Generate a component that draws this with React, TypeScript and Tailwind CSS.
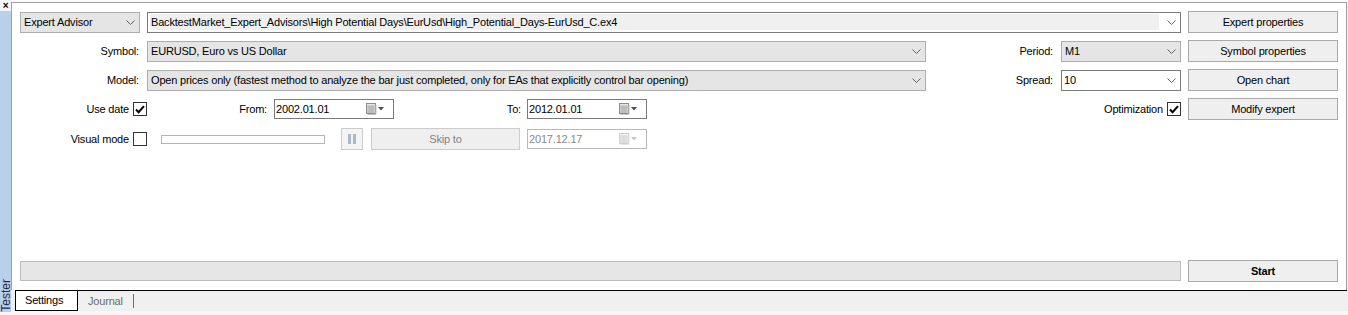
import React from 'react';

function Chevron({ disabled }: { disabled?: boolean }) {
  return (
    <svg width="9" height="5" viewBox="0 0 9 5" className="shrink-0">
      <path d="M0.5 0.5 L4.5 4.5 L8.5 0.5" fill="none" stroke={disabled ? '#b0b0b0' : '#606060'} strokeWidth="1" />
    </svg>
  );
}

function CalIcon({ disabled }: { disabled?: boolean }) {
  const line = disabled ? '#d2d2d2' : '#a4a4a4';
  return (
    <svg width="19" height="12" viewBox="0 0 19 12" className="shrink-0">
      <rect x="0.5" y="0.5" width="9" height="10" fill={disabled ? '#f2f2f2' : '#e6e6e6'} stroke={disabled ? '#cfcfcf' : '#8e8e8e'} />
      <path d="M10 2 V11.5 H1.5" fill="none" stroke={disabled ? '#e4e4e4' : '#c2c2c2'} />
      <path d="M3 3 V10 M5 3 V10 M7 3 V10 M1 3 H9 M1 5 H9 M1 7 H9 M1 9 H9" stroke={line} strokeWidth="0.8" />
      <path d="M12 4 H18 L15 7.5 Z" fill={disabled ? '#c8c8c8' : '#3f5079'} />
    </svg>
  );
}

function Check({ checked }: { checked?: boolean }) {
  return (
    <div className="flex h-[14px] w-[14px] shrink-0 items-center justify-center border border-[#333333] bg-white">
      {checked && (
        <svg width="10" height="9" viewBox="0 0 10 9">
          <path d="M1 4.5 L3.6 7.2 L9 1.2" fill="none" stroke="#000" strokeWidth="2" />
        </svg>
      )}
    </div>
  );
}

function Btn({ children, bold }: { children: React.ReactNode; bold?: boolean }) {
  return (
    <div
      className={`ml-[7px] flex h-[22px] w-[150px] shrink-0 items-center justify-center border border-[#a9a9a9] bg-[#efefef] ${bold ? 'font-bold' : ''}`}
    >
      {children}
    </div>
  );
}

function DateBox({ value, disabled }: { value: string; disabled?: boolean }) {
  return (
    <div
      className={`flex h-[20px] w-[120px] shrink-0 items-center border bg-white pl-[1px] pr-[8px] ${
        disabled ? 'border-[#b9b9b9] text-[#8a8a8a]' : 'border-[#7a7a7a]'
      }`}
    >
      <span className="flex-1">{value}</span>
      <CalIcon disabled={disabled} />
    </div>
  );
}

export default function App() {
  return (
    <div className="flex h-[315px] w-[1348px] overflow-hidden bg-[#f0f0f0] font-['Liberation_Sans',Arial,sans-serif] text-[11px] leading-none tracking-[-0.18px] text-black">
      {/* side strip */}
      <div className="flex w-[11px] shrink-0 flex-col">
        <div className="flex h-[11px] items-start justify-center bg-[#f5f5f5] pt-[1px] text-[10px] font-bold">×</div>
        <div className="flex flex-1 flex-col items-center justify-end bg-[#b9d0ea]">
          <span className="rotate-180 text-[12px] tracking-normal text-[#1c2f4d] [writing-mode:vertical-rl]">Tester</span>
        </div>
        <div className="h-[3px] bg-[#f7f7f7]" />
      </div>

      <div className="flex flex-1 flex-col">
        <div className="h-[2px] bg-[#fafafa]" />
        {/* panel */}
        <div className="mr-[1px] flex h-[288px] flex-col border-l border-r border-t border-[#a0a0a0] bg-white px-[8px] pb-[8px] pt-[8px]">
          <div className="flex h-[22px] items-center">
            <div className="flex h-[21px] w-[120px] shrink-0 items-center border border-[#adadad] bg-[#e5e5e5] pl-[3px] pr-[4px]">
              <span className="flex-1">Expert Advisor</span>
              <Chevron />
            </div>
            <div className="ml-[7px] flex h-[21px] flex-1 items-center border border-[#7a7a7a] bg-white pl-[2px] pr-[4px]">
              <span className="mr-[8px] flex h-[16px] flex-1 items-center bg-[#f0f0f0] pl-[1px]">
                BacktestMarket_Expert_Advisors\High Potential Days\EurUsd\High_Potential_Days-EurUsd_C.ex4
              </span>
              <Chevron />
            </div>
            <Btn>Expert properties</Btn>
          </div>

          <div className="mt-[7px] flex h-[22px] items-center">
            <span className="w-[120px] shrink-0 pr-[1px] text-right">Symbol:</span>
            <div className="ml-[7px] flex h-[21px] w-[779px] shrink-0 items-center border border-[#adadad] bg-[#e5e5e5] pl-[3px] pr-[4px]">
              <span className="flex-1">EURUSD, Euro vs US Dollar</span>
              <Chevron />
            </div>
            <span className="w-[135px] shrink-0 pr-[8px] text-right">Period:</span>
            <div className="flex h-[21px] w-[120px] shrink-0 items-center border border-[#adadad] bg-[#e5e5e5] pl-[3px] pr-[4px]">
              <span className="flex-1">M1</span>
              <Chevron />
            </div>
            <Btn>Symbol properties</Btn>
          </div>

          <div className="mt-[7px] flex h-[22px] items-center">
            <span className="w-[120px] shrink-0 pr-[1px] text-right">Model:</span>
            <div className="ml-[7px] flex h-[21px] w-[779px] shrink-0 items-center border border-[#adadad] bg-[#e5e5e5] pl-[3px] pr-[4px]">
              <span className="flex-1">
                Open prices only (fastest method to analyze the bar just completed, only for EAs that explicitly control bar opening)
              </span>
              <Chevron />
            </div>
            <span className="w-[135px] shrink-0 pr-[8px] text-right">Spread:</span>
            <div className="flex h-[21px] w-[120px] shrink-0 items-center border border-[#7a7a7a] bg-white pl-[2px] pr-[4px]">
              <span className="flex-1">10</span>
              <Chevron />
            </div>
            <Btn>Open chart</Btn>
          </div>

          <div className="mt-[7px] flex h-[22px] items-center">
            <div className="flex w-[127px] shrink-0 items-center justify-end gap-[4px]">
              <span>Use date</span>
              <Check checked />
            </div>
            <span className="w-[127px] shrink-0 pr-[7px] text-right">From:</span>
            <DateBox value="2002.01.01" />
            <span className="w-[133px] shrink-0 pr-[6px] text-right">To:</span>
            <DateBox value="2012.01.01" />
            <div className="flex flex-1 items-center justify-end gap-[4px]">
              <span>Optimization</span>
              <Check checked />
            </div>
            <Btn>Modify expert</Btn>
          </div>

          <div className="mt-[8px] flex h-[22px] items-center">
            <div className="flex w-[127px] shrink-0 items-center justify-end gap-[4px]">
              <span>Visual mode</span>
              <Check />
            </div>
            <div className="ml-[14px] h-[9px] w-[164px] shrink-0 border border-[#b4b4b4] bg-white" />
            <div className="ml-[16px] flex h-[22px] w-[22px] shrink-0 items-center justify-center gap-[2px] border border-[#cccccc] bg-[#f4f4f4]">
              <span className="h-[10px] w-[3px] bg-[#aab7cc]" />
              <span className="h-[10px] w-[3px] bg-[#aab7cc]" />
            </div>
            <div className="ml-[8px] flex h-[22px] w-[149px] shrink-0 items-center justify-center border border-[#cccccc] bg-[#efefef] text-[#838383]">
              Skip to
            </div>
            <div className="ml-[7px]">
              <DateBox value="2017.12.17" disabled />
            </div>
          </div>

          <div className="flex-1" />

          <div className="flex h-[22px] items-center">
            <div className="h-[20px] flex-1 border border-[#bcbcbc] bg-[#e6e6e6]" />
            <Btn bold>Start</Btn>
          </div>
        </div>

        {/* tabs */}
        <div className="ml-[4px] mr-[1px] flex h-[21px] items-start border-t border-black">
          <div className="flex h-[20px] w-[63px] items-center border-b border-l border-r border-black bg-white pl-[9px]">
            Settings
          </div>
          <span className="ml-[10px] mt-[5px] text-[#6d6d6d]">Journal</span>
          <span className="ml-[10px] mt-[3px] h-[14px] w-px bg-[#6d6d6d]" />
        </div>
        <div className="h-[4px] bg-[#f7f7f7]" />
      </div>
    </div>
  );
}
